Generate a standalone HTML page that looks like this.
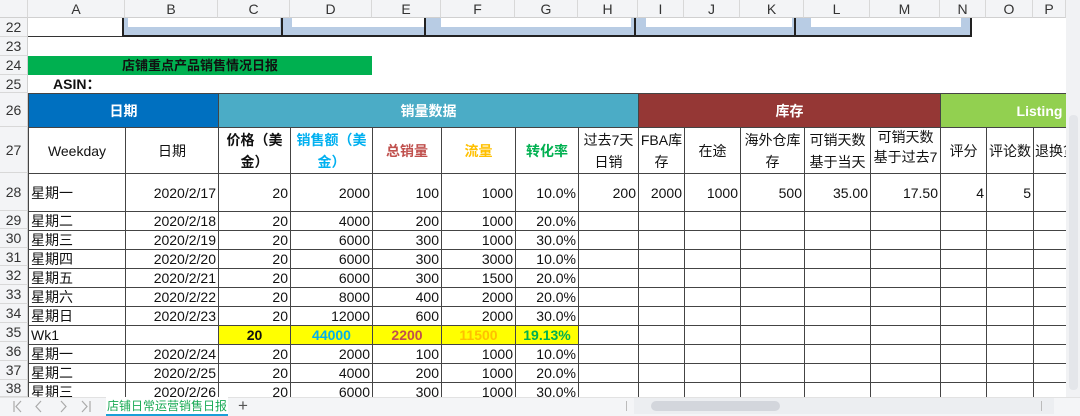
<!DOCTYPE html>
<html><head><meta charset="utf-8"><style>
*{margin:0;padding:0;box-sizing:border-box}
body{width:1080px;height:416px;overflow:hidden;background:#fff;font-family:"Liberation Sans","Noto Sans CJK SC",sans-serif;font-size:14px;color:#111;position:relative}
.a{position:absolute}
.ch{top:0;height:18px;background:#f3f4f6;border-right:1px solid #d8d8d8;border-bottom:1px solid #d0d0d0;text-align:center;line-height:18px;color:#333;font-size:14px}
.rn{left:0;width:28px;background:#f3f4f6;border-bottom:1px solid #d8d8d8;border-right:1px solid #d0d0d0;text-align:center;color:#333;font-size:14px}
table{position:absolute;left:28px;top:93px;border-collapse:collapse;table-layout:fixed}
td{border:1px solid #444;padding:0 2px;white-space:nowrap;overflow:hidden;text-align:right;line-height:18px;height:19px}
td.l{text-align:left}
tr.h1 td{height:34px;color:#fff;font-weight:bold;text-align:center}
tr.h2 td{height:46px;text-align:center;white-space:normal;line-height:22px;padding:0 1px}
tr.r28 td{height:38px}
tr.wk td.y{background:#ff0;font-weight:bold;text-align:center}
</style></head><body>
<div class="a ch" style="left:0;width:28px"></div>
<div class="a ch" style="left:28px;width:97px">A</div>
<div class="a ch" style="left:125px;width:93px">B</div>
<div class="a ch" style="left:218px;width:72px">C</div>
<div class="a ch" style="left:290px;width:82px">D</div>
<div class="a ch" style="left:372px;width:69px">E</div>
<div class="a ch" style="left:441px;width:74px">F</div>
<div class="a ch" style="left:515px;width:63px">G</div>
<div class="a ch" style="left:578px;width:60px">H</div>
<div class="a ch" style="left:638px;width:46px">I</div>
<div class="a ch" style="left:684px;width:56px">J</div>
<div class="a ch" style="left:740px;width:64px">K</div>
<div class="a ch" style="left:804px;width:66px">L</div>
<div class="a ch" style="left:870px;width:70px">M</div>
<div class="a ch" style="left:940px;width:46px">N</div>
<div class="a ch" style="left:986px;width:47px">O</div>
<div class="a ch" style="left:1033px;width:33px">P</div>
<div class="a rn" style="top:18px;height:19px;line-height:19px">22</div>
<div class="a rn" style="top:37px;height:19px;line-height:19px">23</div>
<div class="a rn" style="top:56px;height:19px;line-height:19px">24</div>
<div class="a rn" style="top:75px;height:18px;line-height:18px">25</div>
<div class="a rn" style="top:93px;height:34px;line-height:34px">26</div>
<div class="a rn" style="top:127px;height:46px;line-height:46px">27</div>
<div class="a rn" style="top:173px;height:38px;line-height:38px">28</div>
<div class="a rn" style="top:211px;height:18px;line-height:18px">29</div>
<div class="a rn" style="top:229px;height:19px;line-height:19px">30</div>
<div class="a rn" style="top:248px;height:18px;line-height:18px">31</div>
<div class="a rn" style="top:266px;height:19px;line-height:19px">32</div>
<div class="a rn" style="top:285px;height:19px;line-height:19px">33</div>
<div class="a rn" style="top:304px;height:19px;line-height:19px">34</div>
<div class="a rn" style="top:323px;height:19px;line-height:19px">35</div>
<div class="a rn" style="top:342px;height:19px;line-height:19px">36</div>
<div class="a rn" style="top:361px;height:19px;line-height:19px">37</div>
<div class="a rn" style="top:380px;height:17px;line-height:17px">38</div>
<div class="a" style="left:28px;top:36px;width:94px;height:1px;background:#333"></div>
<div class="a" style="left:122px;top:18px;width:850px;height:19px;background:#b8cce4;border-bottom:2px solid #222"></div>
<div class="a" style="left:122px;top:18px;width:2px;height:19px;background:#222"></div>
<div class="a" style="left:281px;top:18px;width:2px;height:19px;background:#222"></div>
<div class="a" style="left:424px;top:18px;width:2px;height:19px;background:#222"></div>
<div class="a" style="left:634px;top:18px;width:2px;height:19px;background:#222"></div>
<div class="a" style="left:794px;top:18px;width:2px;height:19px;background:#222"></div>
<div class="a" style="left:970px;top:18px;width:2px;height:19px;background:#222"></div>
<div class="a" style="left:128px;top:18px;width:152px;height:9px;background:#fff"></div>
<div class="a" style="left:292px;top:18px;width:132px;height:9px;background:#fff"></div>
<div class="a" style="left:441px;top:18px;width:190px;height:9px;background:#fff"></div>
<div class="a" style="left:646px;top:18px;width:146px;height:9px;background:#fff"></div>
<div class="a" style="left:811px;top:18px;width:150px;height:9px;background:#fff"></div>
<div class="a" style="left:28px;top:56px;width:344px;height:19px;background:#00b050;text-align:center;line-height:19px;font-weight:bold;font-size:13px;color:#111">店铺重点产品销售情况日报</div>
<div class="a" style="left:53px;top:75px;height:18px;line-height:18px;font-weight:bold">ASIN：</div>
<table>
<colgroup><col style="width:97px"><col style="width:93px"><col style="width:72px"><col style="width:82px"><col style="width:69px"><col style="width:74px"><col style="width:63px"><col style="width:60px"><col style="width:46px"><col style="width:56px"><col style="width:64px"><col style="width:66px"><col style="width:70px"><col style="width:46px"><col style="width:47px"><col style="width:33px"></colgroup>
<tr class="h1"><td colspan="2" style="background:#0070c0">日期</td><td colspan="6" style="background:#4bacc6">销量数据</td><td colspan="5" style="background:#953735">库存</td><td colspan="3" style="background:#92d050;text-align:right;padding-right:0;overflow:visible">Listing&nbsp;&nbsp;&nbsp;&nbsp;</td></tr>
<tr class="h2"><td>Weekday</td><td>日期</td><td style="font-weight:bold">价格（美<br>金）</td><td style="font-weight:bold;color:#00b0f0">销售额（美<br>金）</td><td style="font-weight:bold;color:#c0504d">总销量</td><td style="font-weight:bold;color:#ffc000">流量</td><td style="font-weight:bold;color:#00b050">转化率</td><td>过去7天<br>日销</td><td>FBA库<br>存</td><td>在途</td><td>海外仓库<br>存</td><td>可销天数<br>基于当天</td><td style="vertical-align:top"><div style="height:44px;overflow:hidden;line-height:20px;margin-top:-1px">可销天数<br>基于过去7<br>天</div></td><td>评分</td><td>评论数</td><td style="text-align:left;white-space:nowrap">退换货</td></tr>
<tr class="r28"><td class="l">星期一</td><td>2020/2/17</td><td>20</td><td>2000</td><td>100</td><td>1000</td><td>10.0%</td><td>200</td><td>2000</td><td>1000</td><td>500</td><td>35.00</td><td>17.50</td><td>4</td><td>5</td><td></td></tr>
<tr><td class="l" style="height:18px">星期二</td><td>2020/2/18</td><td>20</td><td>4000</td><td>200</td><td>1000</td><td>20.0%</td><td></td><td></td><td></td><td></td><td></td><td></td><td></td><td></td><td></td></tr>
<tr><td class="l">星期三</td><td>2020/2/19</td><td>20</td><td>6000</td><td>300</td><td>1000</td><td>30.0%</td><td></td><td></td><td></td><td></td><td></td><td></td><td></td><td></td><td></td></tr>
<tr><td class="l" style="height:18px">星期四</td><td>2020/2/20</td><td>20</td><td>6000</td><td>300</td><td>3000</td><td>10.0%</td><td></td><td></td><td></td><td></td><td></td><td></td><td></td><td></td><td></td></tr>
<tr><td class="l">星期五</td><td>2020/2/21</td><td>20</td><td>6000</td><td>300</td><td>1500</td><td>20.0%</td><td></td><td></td><td></td><td></td><td></td><td></td><td></td><td></td><td></td></tr>
<tr><td class="l">星期六</td><td>2020/2/22</td><td>20</td><td>8000</td><td>400</td><td>2000</td><td>20.0%</td><td></td><td></td><td></td><td></td><td></td><td></td><td></td><td></td><td></td></tr>
<tr><td class="l">星期日</td><td>2020/2/23</td><td>20</td><td>12000</td><td>600</td><td>2000</td><td>30.0%</td><td></td><td></td><td></td><td></td><td></td><td></td><td></td><td></td><td></td></tr>
<tr class="wk"><td class="l">Wk1</td><td></td><td class="y">20</td><td class="y" style="color:#00b0f0">44000</td><td class="y" style="color:#c0504d">2200</td><td class="y" style="color:#ffc000">11500</td><td class="y" style="color:#00b050">19.13%</td><td></td><td></td><td></td><td></td><td></td><td></td><td></td><td></td><td></td></tr>
<tr><td class="l">星期一</td><td>2020/2/24</td><td>20</td><td>2000</td><td>100</td><td>1000</td><td>10.0%</td><td></td><td></td><td></td><td></td><td></td><td></td><td></td><td></td><td></td></tr>
<tr><td class="l">星期二</td><td>2020/2/25</td><td>20</td><td>4000</td><td>200</td><td>1000</td><td>20.0%</td><td></td><td></td><td></td><td></td><td></td><td></td><td></td><td></td><td></td></tr>
<tr><td class="l">星期三</td><td>2020/2/26</td><td>20</td><td>6000</td><td>300</td><td>1000</td><td>30.0%</td><td></td><td></td><td></td><td></td><td></td><td></td><td></td><td></td><td></td></tr>
</table>
<div class="a" style="left:1066px;top:0;width:14px;height:397px;background:#f1f2f4"></div>
<div class="a" style="left:1069px;top:115px;width:9px;height:275px;background:#e4e6ea;border-radius:4px"></div>
<div class="a" style="left:0;top:397px;width:1080px;height:19px;background:#f4f5f7;border-top:1px solid #e2e2e2"></div>
<svg class="a" style="left:10px;top:399px" width="85" height="15" viewBox="0 0 85 15" fill="none" stroke="#aaa" stroke-width="1.2">
<path d="M4 2v11M11 2l-5 5.5 5 5.5"/><path d="M31 2l-5 5.5 5 5.5"/><path d="M51 2l5 5.5-5 5.5"/><path d="M72 2l5 5.5-5 5.5M80 2v11"/></svg>
<div class="a" style="left:106px;top:397px;width:122px;height:19px;background:#fff;color:#1aaa55;font-size:12px;text-align:center;line-height:18px;border-bottom:2px solid #1aa0d8">店铺日常运营销售日报</div>
<div class="a" style="left:238px;top:396px;height:19px;line-height:19px;color:#555;font-size:17px">+</div>
<div class="a" style="left:626px;top:401px;width:1px;height:10px;background:#bbb"></div>
<div class="a" style="left:634px;top:398px;width:420px;height:16px;background:#eceef1"></div>
<div class="a" style="left:651px;top:401px;width:129px;height:10px;background:#d3d6dc;border-radius:5px"></div>
<div class="a" style="left:1041px;top:401px;width:1px;height:10px;background:#bbb"></div>
</body></html>
